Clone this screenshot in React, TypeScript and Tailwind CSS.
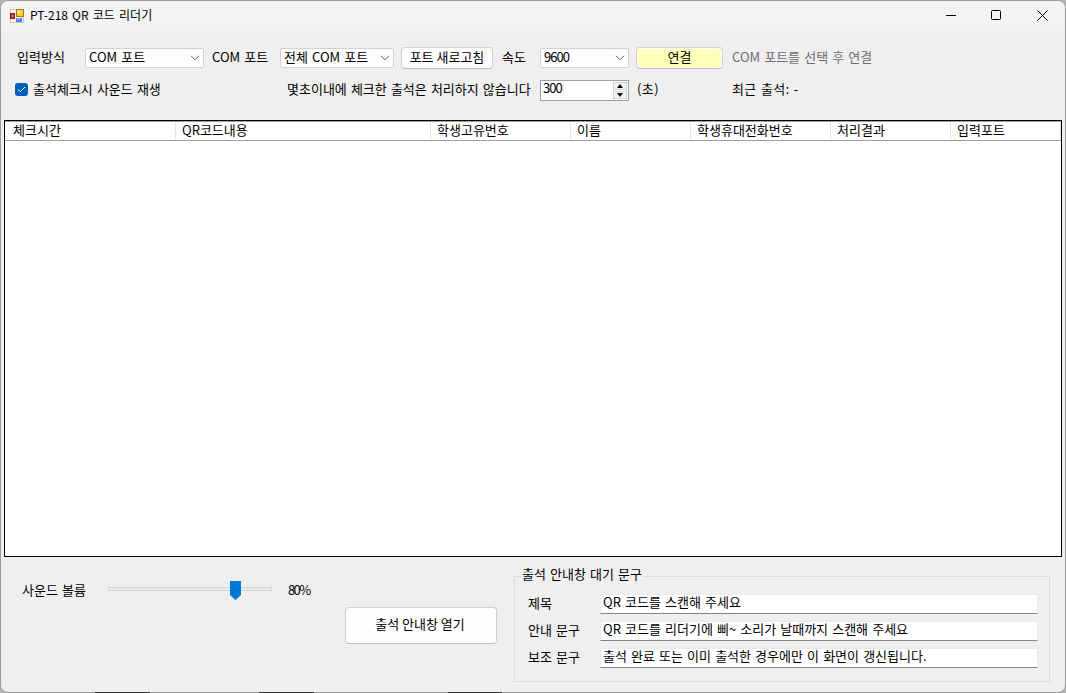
import type { ReactNode } from 'react';
import clsx from 'clsx';

const columns = [
  { label: '체크시간', width: 'w-[171px] pl-2' },
  { label: 'QR코드내용', width: 'w-[255px] pl-1.5' },
  { label: '학생고유번호', width: 'w-[140px] pl-1.5' },
  { label: '이름', width: 'w-[120px] pl-1.5' },
  { label: '학생휴대전화번호', width: 'w-[140px] pl-1.5' },
  { label: '처리결과', width: 'w-[120px] pl-1.5' },
  { label: '입력포트', width: 'w-[110px] pl-1.5' },
];

const messages = [
  { label: '제목', value: 'QR 코드를 스캔해 주세요' },
  { label: '안내 문구', value: 'QR 코드를 리더기에 삐~ 소리가 날때까지 스캔해 주세요' },
  { label: '보조 문구', value: '출석 완료 또는 이미 출석한 경우에만 이 화면이 갱신됩니다.' },
];

function AppIcon() {
  return (
    <svg width="14" height="14" viewBox="0 0 14 14" className="mt-px shrink-0">
      <rect x="0.5" y="0.5" width="13" height="13" fill="#f4f4f4" stroke="#c4c4c4" />
      <rect x="6.5" y="0.5" width="7" height="7" fill="#f5c832" stroke="#a87b12" />
      <rect x="7.5" y="1.5" width="3" height="3" fill="#ffe88a" />
      <rect x="0.5" y="4.5" width="4" height="5" fill="#c33131" stroke="#8c1c1c" />
      <rect x="2" y="6" width="1" height="2" fill="#f0a0a0" />
      <rect x="6" y="9" width="6" height="4" fill="#4a7fe0" />
      <rect x="7" y="9" width="3" height="2" fill="#86acf3" />
    </svg>
  );
}

function TitleBar() {
  return (
    <header className="flex h-[30px] shrink-0 items-center bg-[#f3f3f3] pb-[2px] pl-[9px]">
      <AppIcon />
      <h1 className="ml-[6px] grow text-xs tracking-[0.08px]">PT-218 QR 코드 리더기</h1>
      <div className="mr-[17px] flex w-[102px] items-center justify-between">
        <svg width="11" height="11" viewBox="0 0 11 11" stroke="#000" fill="none">
          <path d="M0 5.5H10" />
        </svg>
        <svg width="13" height="11" viewBox="0 0 13 11" stroke="#000" fill="none">
          <rect x="0.5" y="0.5" width="9" height="9" rx="1" />
        </svg>
        <svg width="11" height="11" viewBox="0 0 11 11" stroke="#000" fill="none">
          <path d="M0.5 0.5L10.5 10.5M10.5 0.5L0.5 10.5" />
        </svg>
      </div>
    </header>
  );
}

function ComboBox({ className, children }: { className?: string; children: ReactNode }) {
  return (
    <div
      className={clsx(
        'flex h-5 items-center justify-between rounded-[2px] border border-[#d2d2d2] bg-[#fdfdfd] px-[3px]',
        className
      )}
    >
      <span className="pb-[2px]">{children}</span>
      <svg width="10" height="6" viewBox="0 0 10 6" stroke="#606060" fill="none">
        <path d="M1 0.8L5 4.8L9 0.8" />
      </svg>
    </div>
  );
}

function Button({ className, children }: { className?: string; children: ReactNode }) {
  return (
    <button
      className={clsx(
        'flex items-center justify-center rounded-[4px] border border-[#d0d0d0] border-b-[#bcbcbc]',
        className
      )}
    >
      {children}
    </button>
  );
}

function Spinner() {
  return (
    <div className="flex h-[21px] w-[89px] justify-between border border-[#a0a0a0] bg-white p-px">
      <span className="pl-px leading-[11px] tracking-[-1px]">300</span>
      <div className="flex w-[14px] flex-col gap-px">
        <div className="flex flex-1 items-center justify-center border border-[#d0d0d0] bg-[#f4f4f4]">
          <svg width="6" height="4" viewBox="0 0 6 4">
            <path d="M3 0L6 4H0Z" />
          </svg>
        </div>
        <div className="flex flex-1 items-center justify-center border border-[#d0d0d0] bg-[#f4f4f4]">
          <svg width="6" height="4" viewBox="0 0 6 4">
            <path d="M0 0H6L3 4Z" />
          </svg>
        </div>
      </div>
    </div>
  );
}

function Toolbar() {
  return (
    <div className="h-[89px] shrink-0 pt-4">
      <div className="grid h-[22px] grid-cols-[68px_127px_68px_121px_101px_38px_96px_96px_1fr] items-center pl-4">
        <span className="pb-[2px]">입력방식</span>
        <ComboBox className="w-[119px]">COM 포트</ComboBox>
        <span className="pb-[2px]">COM 포트</span>
        <ComboBox className="w-[114px]">전체 COM 포트</ComboBox>
        <Button className="h-[22px] w-[92px] bg-[#fdfdfd] pb-[2px]">포트 새로고침</Button>
        <span className="pb-[2px]">속도</span>
        <ComboBox className="w-[89px] tracking-[-1px]">9600</ComboBox>
        <Button className="h-[22px] w-[87px] bg-[#ffffb9] pb-[2px] shadow-[inset_0_0_0_1px_#fdfdfd]">연결</Button>
        <span className="pb-[2px] text-[#6d6d6d]">COM 포트를 선택 후 연결</span>
      </div>
      <div className="mt-[11px] grid h-[21px] grid-cols-[272px_253px_97px_95px_1fr] items-center pl-[14px]">
        <label className="flex items-center gap-[5px] pb-[2px]">
          <span className="flex size-[13px] items-center justify-center rounded-[3px] bg-[#005fb8]">
            <svg width="9" height="7" viewBox="0 0 9 7" stroke="#fff" fill="none">
              <path d="M1 3.5L3.3 5.7L8 1" />
            </svg>
          </span>
          <span className="pb-[2px]">출석체크시 사운드 재생</span>
        </label>
        <span className="pb-[3px]">몇초이내에 체크한 출석은 처리하지 않습니다</span>
        <Spinner />
        <span className="pb-[3px] tracking-[0.4px]">(초)</span>
        <span className="pb-[3px] tracking-[0.3px]">최근 출석: -</span>
      </div>
    </div>
  );
}

function ScanTable() {
  return (
    <div className="mx-[3px] h-[437px] shrink-0 border border-black bg-white">
      <div className="flex h-5 border-t border-b border-t-[#a0a0a0] border-b-[#a0a0a0]">
        {columns.map((col) => (
          <div
            key={col.label}
            className={clsx(
              'flex shrink-0 items-center border-r border-[#e5e5e5] pb-[2px] whitespace-nowrap last:shrink',
              col.width
            )}
          >
            {col.label}
          </div>
        ))}
      </div>
    </div>
  );
}

function VolumeSlider() {
  return (
    <div className="flex h-5 items-center pl-[21px]">
      <span className="w-[86px]">사운드 볼륨</span>
      <div className="relative mb-[2px] h-[4px] w-[164px] border border-[#d0d5d5] bg-[#e7eaea]">
        <svg width="11" height="19" viewBox="0 0 11 19" className="absolute top-[-7px] left-[121px]">
          <path d="M0 0H11V14L5.5 19L0 14Z" fill="#0078d7" />
        </svg>
      </div>
      <span className="ml-4 tracking-[-1.6px]">80%</span>
    </div>
  );
}

function MessageGroup() {
  return (
    <fieldset className="mt-[10px] h-[115px] w-[536px] border border-[#dcdcdc] pl-[13px]">
      <legend className="-ml-[7px] h-[19px] px-px leading-[14px]">출석 안내창 대기 문구</legend>
      <div className="mt-[8px] flex flex-col gap-[7px]">
        {messages.map((msg) => (
          <div key={msg.label} className="flex h-5 items-center">
            <span className="w-[72px] pb-[3px]">{msg.label}</span>
            <div className="h-5 w-[438px] border border-[#ebebeb] border-b-[#868686] bg-white pl-[2px] leading-[13px]">
              {msg.value}
            </div>
          </div>
        ))}
      </div>
    </fieldset>
  );
}

export default function App() {
  return (
    <div className="relative h-[693px] w-[1066px] bg-[#b4b4b4] font-['Noto_Sans_CJK_KR',sans-serif] text-[13px] leading-4 text-black [word-spacing:1.2px]">
      <div className="flex h-full flex-col overflow-hidden rounded-[8px] border border-[#9c9c9c] bg-[#efefef]">
        <TitleBar />
        <Toolbar />
        <ScanTable />
        <div className="flex grow">
          <div className="w-[344px] pt-[23px]">
            <VolumeSlider />
          </div>
          <div className="w-[169px] pt-[50px]">
            <Button className="h-[37px] w-[152px] bg-[#fdfdfd] pr-[2px] pb-[3px]">출석 안내창 열기</Button>
          </div>
          <MessageGroup />
        </div>
      </div>
      {/* desktop showing along the window's bottom edge */}
      <div className="absolute bottom-0 left-[95px] flex gap-[109px]">
        <div className="h-px w-[55px] bg-[#303030]" />
        <div className="h-px w-[55px] bg-[#303030]" />
      </div>
      <div className="absolute bottom-0 left-[448px] h-px w-[54px] bg-[#303030]" />
    </div>
  );
}
